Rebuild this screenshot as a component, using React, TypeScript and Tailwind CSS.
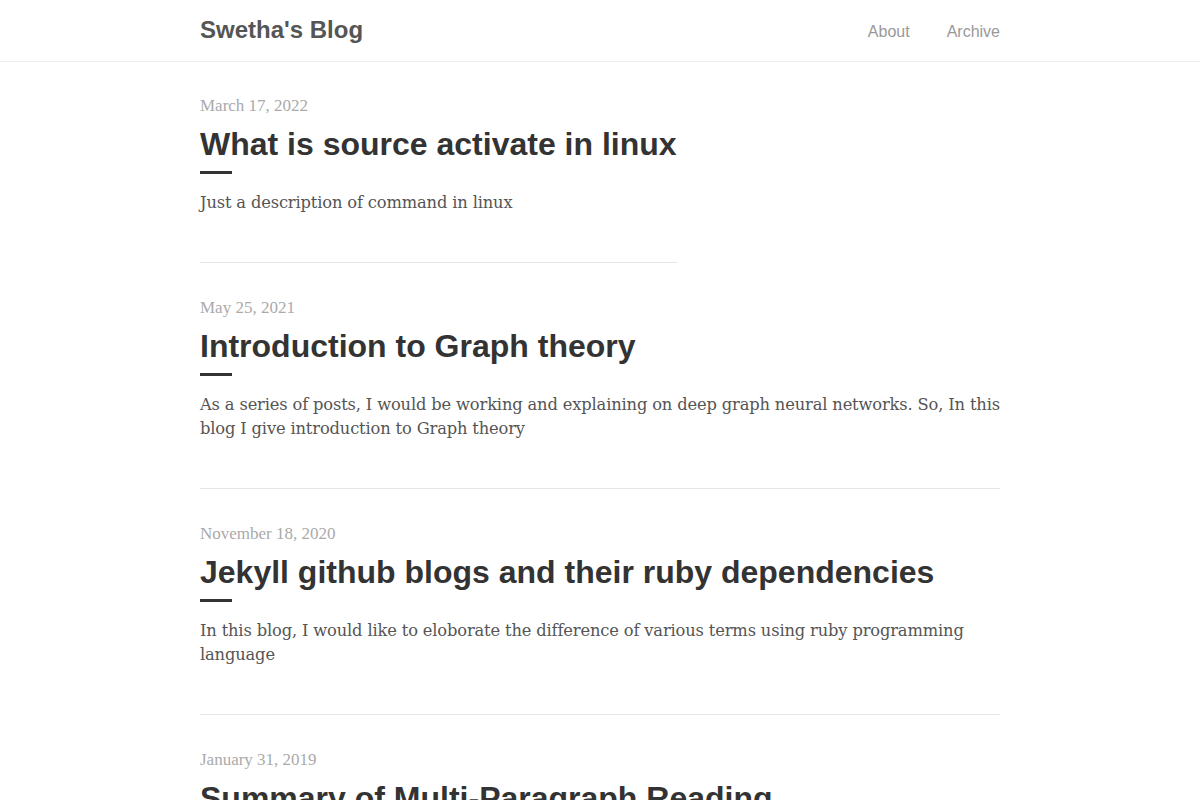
import React from "react";

const posts = [
  {
    date: "March 17, 2022",
    title: "What is source activate in linux",
    desc: "Just a description of command in linux",
  },
  {
    date: "May 25, 2021",
    title: "Introduction to Graph theory",
    desc: "As a series of posts, I would be working and explaining on deep graph neural networks. So, In this blog I give introduction to Graph theory",
  },
  {
    date: "November 18, 2020",
    title: "Jekyll github blogs and their ruby dependencies",
    desc: "In this blog, I would like to eloborate the difference of various terms using ruby programming language",
  },
  {
    date: "January 31, 2019",
    title: "Summary of Multi-Paragraph Reading",
    desc: "A summary of the paper on multi-paragraph reading comprehension",
  },
];

const sans = "font-['Liberation_Sans',Arial,sans-serif]";
const serif = "font-['Liberation_Serif','Times_New_Roman',serif]";
const body = "font-['DejaVu_Serif',Georgia,serif]";

export default function App() {
  return (
    <div className="min-h-screen bg-white">
      {/* Header */}
      <header className="h-[62px] border-b border-[#eeeeee]">
        <div className="mx-auto flex h-full w-[800px] items-center justify-between">
          <a className={`${sans} -mt-[2px] text-[24px] font-bold text-[#555555]`}>Swetha's Blog</a>
          <nav className={`${sans} mt-[2px] flex gap-[37px] text-[16px] text-[#999999]`}>
            <a>About</a>
            <a>Archive</a>
          </nav>
        </div>
      </header>

      {/* Posts */}
      <main className="mx-auto w-[800px] pt-[34px]">
        {posts.map((p) => (
          <div key={p.title} className="mb-[35px] w-fit max-w-full border-b border-[#e5e5e5] pb-[47px]">
            <div className={`${serif} text-[17px] leading-5 text-[#aaaaaa]`}>{p.date}</div>
            <h2 className={`${sans} mt-[8px] text-[32px] font-bold leading-10 text-[#333333]`}>{p.title}</h2>
            <div className="mt-[7px] h-[3px] w-[32px] bg-[#333333]" />
            <p className={`${body} mt-[17px] text-[16.3px] leading-6 tracking-[-0.15px] text-[#555555]`}>{p.desc}</p>
          </div>
        ))}
      </main>
    </div>
  );
}
